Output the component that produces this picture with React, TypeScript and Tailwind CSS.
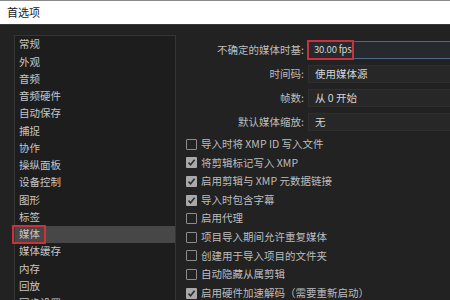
import React from "react";

const navItems = [
  "常规",
  "外观",
  "音频",
  "音频硬件",
  "自动保存",
  "捕捉",
  "协作",
  "操纵面板",
  "设备控制",
  "图形",
  "标签",
  "媒体",
  "媒体缓存",
  "内存",
  "回放",
  "同步设置",
];

const fields = [
  { label: "不确定的媒体时基:", value: "30.00 fps", active: true },
  { label: "时间码:", value: "使用媒体源" },
  { label: "帧数:", value: "从 0 开始" },
  { label: "默认媒体缩放:", value: "无" },
];

const checks = [
  { text: "导入时将 XMP ID 写入文件", on: false },
  { text: "将剪辑标记写入 XMP", on: true },
  { text: "启用剪辑与 XMP 元数据链接", on: true },
  { text: "导入时包含字幕", on: true },
  { text: "启用代理", on: false },
  { text: "项目导入期间允许重复媒体", on: false },
  { text: "创建用于导入项目的文件夹", on: false },
  { text: "自动隐藏从属剪辑", on: false },
  { text: "启用硬件加速解码（需要重新启动）", on: true },
];

function Check({ on }: { on: boolean }) {
  return on ? (
    <div className="w-[11px] h-[11px] bg-[#a9a9a9] rounded-[1px] flex items-center justify-center shrink-0">
      <svg width="9" height="9" viewBox="0 0 9 9">
        <path d="M1.5 4.6 L3.6 6.8 L7.6 1.8" fill="none" stroke="#2e2e2e" strokeWidth="1.6" />
      </svg>
    </div>
  ) : (
    <div className="w-[11px] h-[11px] border border-[#8c8c8c] rounded-[1px] shrink-0" />
  );
}

export default function App() {
  return (
    <div
      className="w-[450px] h-[300px] overflow-hidden bg-[#222222] text-[10.5px] leading-none"
      style={{ fontFamily: '"Noto Sans CJK SC", "Noto Sans", sans-serif' }}
    >
      <div className="h-[25px] bg-white border-t border-[#8a8a8a] border-b border-b-[#3a3a3a] flex items-center pl-[7px] text-[#1a1a1a] text-[11px]">
        首选项
      </div>
      <div className="flex pt-[10px]">
        <div className="ml-[14px] w-[162px] h-[300px] border border-[#353535] bg-[#1d1d1d] shrink-0">
          {navItems.map((n, i) => (
            <div
              key={n}
              className={
                "relative h-[17.25px] flex items-center pl-[4px] text-[#c6c6c6] " +
                (i === 11 ? "bg-[#474747]" : "")
              }
            >
              {n}
              {i === 11 && (
                <div className="absolute left-[-3px] top-[-1px] w-[34px] h-[19px] border-2 border-[#c8323c]" />
              )}
            </div>
          ))}
        </div>
        <div className="flex-1 pl-[10px] pt-[6px]">
          <div className="flex flex-col gap-[6px]">
            {fields.map((f) => (
              <div key={f.label} className="flex items-center h-[18px]">
                <div className="w-[119px] text-right text-[#bdbdbd] pr-[1px]">{f.label}</div>
                <div
                  className={
                    "relative ml-[3px] w-[200px] h-[18px] flex items-center text-[#d6d6d6] " +
                    (f.active
                      ? "bg-[#262a2e] border border-[#4d6a86] pl-[5px] text-[9.5px] tracking-[-0.2px]"
                      : "bg-[#272727] border border-[#2e2e2e] pl-[6px]")
                  }
                >
                  {f.value}
                  {f.active && (
                    <div className="absolute left-[-2px] top-[-2px] w-[47px] h-[20px] border-2 border-[#c8323c]" />
                  )}
                </div>
              </div>
            ))}
          </div>
          <div className="mt-[4px] flex flex-col">
            {checks.map((c) => (
              <div key={c.text} className="h-[18.6px] flex items-center gap-[4px] text-[#bdbdbd] whitespace-nowrap">
                <Check on={c.on} />
                <span>{c.text}</span>
              </div>
            ))}
          </div>
        </div>
      </div>
    </div>
  );
}
